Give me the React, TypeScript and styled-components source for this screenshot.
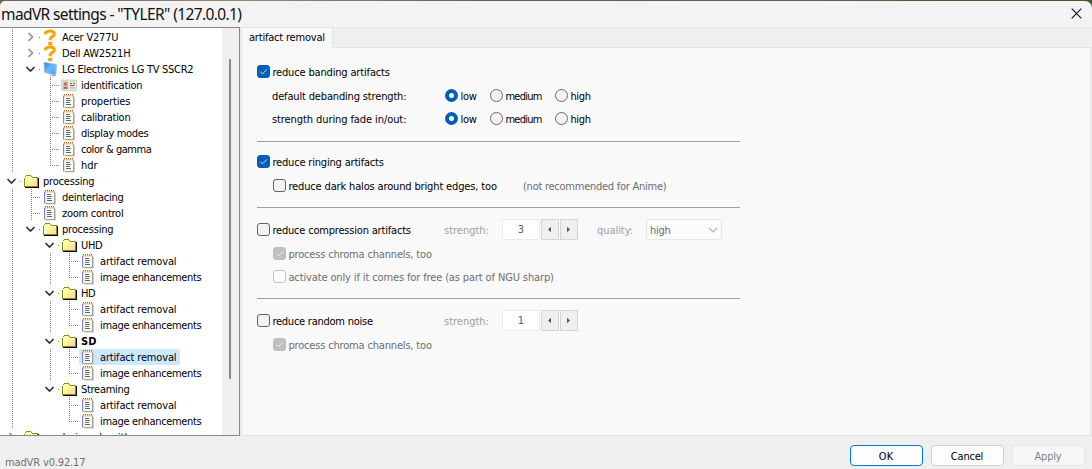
import React, { useLayoutEffect, useRef, useState } from 'react';
import styled, { createGlobalStyle, css } from 'styled-components';

const GlobalStyle = createGlobalStyle`
  *, *::before, *::after { box-sizing: border-box; }
  body {
    margin: 0;
    overflow: hidden;
    font: 11px/16px 'DejaVu Sans Condensed', 'DejaVu Sans', sans-serif;
    font-stretch: condensed;
    color: #000;
  }
`;

const TextRun = styled.span<{ $bold?: boolean }>`
  display: inline-block;
  padding-top: 1px;
  margin-bottom: -1px;
  white-space: pre;
  font-weight: ${(p) => (p.$bold ? 700 : 400)};
`;

/* Text tracked so that it takes up the given number of pixels. */
function Text({ children, w, bold }: { children: string; w: number; bold?: boolean }) {
  const ref = useRef<HTMLSpanElement>(null);
  const [spacing, setSpacing] = useState(0);
  useLayoutEffect(() => {
    if (ref.current) {
      const natural = ref.current.getBoundingClientRect().width;
      setSpacing((w + 0.4 - natural) / children.length);
    }
  }, [children, w]);
  return (
    <TextRun ref={ref} $bold={bold} style={{ letterSpacing: spacing }}>
      {children}
    </TextRun>
  );
}

const Window = styled.div`
  display: flex;
  flex-direction: column;
  width: 1092px;
  height: 469px;
  background: #efefef;
  overflow: hidden;
`;

const Desktop = styled.div`
  background: linear-gradient(90deg, #6f6257 0, #94887d 240px, #6c5d50 480px, #59604a 760px, #3f5c2f 1092px);
`;

const TitleBar = styled.header`
  display: flex;
  align-items: center;
  justify-content: space-between;
  height: 26px;
  margin-top: 1px;
  padding: 0 10px 2px 1px;
  background: #f3f3f3;
  border-radius: 5px 7px 0 0;
  font: 15.5px/24px 'Noto Sans', 'Open Sans', sans-serif;
  color: #111;
`;

const Body = styled.main`
  display: flex;
  height: 409px;
`;

const Tree = styled.nav`
  display: flex;
  width: 240px;
  height: 409px;
  border: solid #828790;
  border-width: 1px 1px 1px 0;
  background: #fff;
  overflow: hidden;
`;

const TreeRows = styled.div`
  flex: 1;
  height: 407px;
  padding: 1px 0 0 3px;
  overflow: hidden;
`;

const ScrollTrack = styled.div`
  width: 17px;
  padding: 31px 0 0 7px;
  background: #f0f0f0;
`;

const ScrollThumb = styled.div`
  width: 2px;
  height: 320px;
  border-radius: 1px;
  background: #868686;
`;

const TreeRow = styled.div`
  display: flex;
  height: 16px;
`;

type CellKind = 'empty' | 'line' | 'tee' | 'end' | 'open' | 'closed';

const vDots = 'repeating-linear-gradient(180deg, #808080 0 1px, transparent 1px 2px)';
const hDots = 'repeating-linear-gradient(90deg, #808080 0 1px, transparent 1px 2px)';

const Cell = styled.span<{ $kind: CellKind }>`
  display: flex;
  align-items: center;
  width: 19px;
  height: 16px;
  background-repeat: no-repeat;
  ${(p) => p.$kind === 'line' && css`
    background-image: ${vDots};
    background-size: 1px 16px;
    background-position: 9px 0;
  `}
  ${(p) => (p.$kind === 'tee' || p.$kind === 'end') && css`
    background-image: ${vDots}, ${hDots};
    background-size: 1px ${p.$kind === 'tee' ? 16 : 9}px, 10px 1px;
    background-position: 9px 0, 9px 8px;
  `}
  ${(p) => (p.$kind === 'open' || p.$kind === 'closed') && css`
    background-image: ${hDots};
    background-size: 3px 1px;
    background-position: 17px 8px;
  `}
`;

const Item = styled.span<{ $selected?: boolean }>`
  display: flex;
  gap: 3px;
  height: 16px;
  padding: 0 4px 0 2px;
  border-radius: 2px;
  background: ${(p) => (p.$selected ? '#cce8ff' : 'transparent')};
`;

const IconSlot = styled.span`
  display: block;
  width: 16px;
  height: 16px;
  svg { display: block; overflow: visible; }
`;

const Chevron = ({ open }: { open: boolean }) => (
  <svg width="19" height="16" viewBox="0 0 19 16" fill="none">
    {open ? (
      <path d="M4.5 6l4 4 4-4" stroke="#333" strokeWidth="1.7" />
    ) : (
      <path d="M6.5 4l4 4-4 4" stroke="#8c8c8c" strokeWidth="1.5" />
    )}
  </svg>
);

const FolderIcon = () => (
  <svg width="16" height="16" viewBox="0 0 16 16" shapeRendering="crispEdges">
    <defs>
      <linearGradient id="folder" x1="0" y1="0" x2="1" y2="1">
        <stop offset="0.3" stopColor="#ffffa0" />
        <stop offset="1" stopColor="#ffcda0" />
      </linearGradient>
    </defs>
    <g transform="translate(0 1)">
      <path d="M1 4V3h1V2h5v1h1v1h6v9H1z" fill="url(#folder)" />
      <path d="M0.5 13V3.5M2 2.5h-1M2 1.5h5M7 2.5h1M8 3.5h6M1 12.5h13M13.5 4v8" stroke="#8c8a10" fill="none" />
      <path d="M2 4.5h11M1.5 5v7" stroke="#ffffd8" fill="none" />
      <path d="M1 13.5h14M14.5 4v10" stroke="#000" fill="none" />
    </g>
  </svg>
);

const NoteIcon = () => (
  <svg width="16" height="16" viewBox="0 0 16 16">
    <path d="M12 4h1v11.4H3v-1" fill="#cfcfcf" />
    <rect x="1.5" y="2.5" width="10" height="11.8" fill="#fffff8" />
    <path d="M1.6 3v11.5" stroke="#8482d8" strokeWidth="1.2" />
    <path d="M11.5 3v11.4M2.6 14.4h9" stroke="#8b9a94" strokeWidth="0.9" />
    <path d="M2 1.5h10" stroke="#8c6a30" strokeWidth="1" strokeDasharray="1 1" />
    <path d="M1.5 2.8h10.5" stroke="#dfa04c" strokeWidth="1.4" strokeDasharray="1.3 0.7" />
    <path d="M4 5.5H8M4 7.5H9M4 9.5H8M4 11.5H9" stroke="#566a5d" strokeWidth="1" />
  </svg>
);

const QuestionIcon = () => (
  <svg width="16" height="16" viewBox="0 0 16 16" fill="none">
    <path d="M2.6 5.4V3.6Q4.4 1.9 7 1.9Q11.3 1.9 11.3 4.9Q11.3 6.6 9.2 7.7Q7.1 8.8 7.1 11.3" stroke="#faa20a" strokeWidth="3" />
    <path d="M5.2 12.8h4v3.4h-4z" fill="#faa20a" />
  </svg>
);

const MonitorIcon = () => (
  <svg width="16" height="16" viewBox="0 0 16 16">
    <defs>
      <linearGradient id="screen" x1="0" y1="0" x2="1" y2="1">
        <stop offset="0" stopColor="#2687e4" />
        <stop offset="0.5" stopColor="#6dbbfa" />
        <stop offset="1" stopColor="#3b9df0" />
      </linearGradient>
    </defs>
    <path d="M5 13.5l5 2 3-0.7 1-11-1.5-0.8L11 14z" fill="#a6b0ba" />
    <path d="M1 1.2l12.2 2L12 14 1.5 11.6z" fill="url(#screen)" stroke="#9cc6ea" strokeWidth="0.6" />
  </svg>
);

const CardIcon = () => (
  <svg width="16" height="16" viewBox="0 0 16 16">
    <rect x="-0.5" y="3" width="15" height="10.5" rx="0.8" fill="#eceadf" stroke="#c5c7bd" strokeWidth="0.8" />
    <rect x="1" y="5" width="5" height="7" fill="#e0b5a6" />
    <circle cx="3.5" cy="7" r="1.4" fill="#a8685a" />
    <path d="M1.4 12c0-3.4 4.4-3.4 4.4 0z" fill="#c0645c" />
    <path d="M1 4.3h5M8 4.3h5" stroke="#cdd0b8" />
    <path d="M8 6.5h2M11 6.5h2M8 8.5h4.5" stroke="#5c625b" strokeWidth="1.1" />
    <path d="M8 10.9h5" stroke="#a9b9a9" strokeWidth="1.2" />
  </svg>
);

const icons = {
  folder: FolderIcon,
  note: NoteIcon,
  question: QuestionIcon,
  monitor: MonitorIcon,
  card: CardIcon,
};

const cellKinds: Record<string, CellKind> = {
  '.': 'empty', '|': 'line', t: 'tee', l: 'end', v: 'open', '>': 'closed',
};

interface Node {
  cells: string;
  icon: keyof typeof icons;
  label: string;
  w: number;
  bold?: boolean;
  selected?: boolean;
}

const nodes: Node[] = [
  { cells: '|>', icon: 'question', label: 'Acer V277U', w: 56 },
  { cells: '|>', icon: 'question', label: 'Dell AW2521H', w: 68 },
  { cells: '|v', icon: 'monitor', label: 'LG Electronics LG TV SSCR2', w: 131 },
  { cells: '|.t', icon: 'card', label: 'identification', w: 61 },
  { cells: '|.t', icon: 'note', label: 'properties', w: 49 },
  { cells: '|.t', icon: 'note', label: 'calibration', w: 49 },
  { cells: '|.t', icon: 'note', label: 'display modes', w: 67 },
  { cells: '|.t', icon: 'note', label: 'color & gamma', w: 70 },
  { cells: '|.l', icon: 'note', label: 'hdr', w: 16 },
  { cells: 'v', icon: 'folder', label: 'processing', w: 51 },
  { cells: '|t', icon: 'note', label: 'deinterlacing', w: 61 },
  { cells: '|t', icon: 'note', label: 'zoom control', w: 61 },
  { cells: '|v', icon: 'folder', label: 'processing', w: 51 },
  { cells: '|.v', icon: 'folder', label: 'UHD', w: 21 },
  { cells: '|.|t', icon: 'note', label: 'artifact removal', w: 76 },
  { cells: '|.|l', icon: 'note', label: 'image enhancements', w: 101 },
  { cells: '|.v', icon: 'folder', label: 'HD', w: 14 },
  { cells: '|.|t', icon: 'note', label: 'artifact removal', w: 76 },
  { cells: '|.|l', icon: 'note', label: 'image enhancements', w: 101 },
  { cells: '|.v', icon: 'folder', label: 'SD', w: 15, bold: true },
  { cells: '|.|t', icon: 'note', label: 'artifact removal', w: 76, selected: true },
  { cells: '|.|l', icon: 'note', label: 'image enhancements', w: 101 },
  { cells: '|.v', icon: 'folder', label: 'Streaming', w: 48 },
  { cells: '|..t', icon: 'note', label: 'artifact removal', w: 76 },
  { cells: '|..l', icon: 'note', label: 'image enhancements', w: 101 },
  { cells: '>', icon: 'folder', label: 'rendering algorithms', w: 102 },
];

const Tabs = styled.section`
  display: flex;
  flex-direction: column;
  align-items: flex-start;
  width: 850px;
  margin-left: 1px;
`;

const Tab = styled.div`
  width: 92px;
  height: 21px;
  margin-bottom: -1px;
  padding: 1px 0 0 7px;
  border: 1px solid #e3e3e3;
  border-bottom: 0;
  background: #f9f9f9;
  z-index: 1;
`;

const Page = styled.div`
  width: 850px;
  height: 390px;
  padding: 16px 0 0 15px;
  border: 1px solid #e3e3e3;
  background: #f9f9f9;
`;

const Row = styled.div<{ $gap?: number; $tall?: boolean; $indent?: boolean }>`
  display: flex;
  align-items: center;
  height: ${(p) => (p.$tall ? 22 : 16)}px;
  margin-top: ${(p) => p.$gap ?? 0}px;
  padding-left: ${(p) => (p.$indent ? 16 : 0)}px;
`;

const Lead = styled.div<{ $width: number }>`
  display: flex;
  flex: none;
  width: ${(p) => p.$width}px;
`;

const Divider = styled.hr<{ $gap: number }>`
  width: 483px;
  height: 1px;
  margin: ${(p) => p.$gap}px 0 0;
  border: 0;
  background: #a0a0a0;
`;

const CheckLabel = styled.label<{ $disabled?: boolean }>`
  display: flex;
  align-items: center;
  gap: 2.4px;
  color: ${(p) => (p.$disabled ? '#6d6d6d' : '#000')};
`;

const Box = styled.span<{ $checked?: boolean; $disabled?: boolean }>`
  display: block;
  width: 13px;
  height: 13px;
  margin-bottom: 1px;
  border-radius: 3px;
  border: 1px solid ${(p) => (p.$checked ? (p.$disabled ? '#bfbfbf' : '#005fb8') : p.$disabled ? '#c3c3c3' : '#626262')};
  background: ${(p) => (p.$checked ? (p.$disabled ? '#bfbfbf' : '#005fb8') : p.$disabled ? '#fbfbfb' : '#f3f3f3')};
  svg { display: block; }
`;

const Dot = styled.span<{ $on?: boolean }>`
  width: 13px;
  height: 13px;
  margin-bottom: 1px;
  border-radius: 50%;
  border: ${(p) => (p.$on ? '4px solid #005fb8' : '1px solid #6a6a6a')};
  background: ${(p) => (p.$on ? '#fff' : '#f3f3f3')};
`;

const RadioLabel = styled.label<{ $width: number }>`
  display: flex;
  align-items: center;
  gap: 2.4px;
  width: ${(p) => p.$width}px;
`;

const Muted = styled.span<{ $width?: number; $strong?: boolean }>`
  display: flex;
  flex: none;
  width: ${(p) => (p.$width ? `${p.$width}px` : 'auto')};
  color: ${(p) => (p.$strong ? '#6d6d6d' : '#a0a0a0')};
`;

const Field = styled.span`
  display: flex;
  justify-content: center;
  width: 38px;
  height: 21px;
  padding-top: 1px;
  border: 1px solid #ebebeb;
  border-radius: 2px;
  background: #fff;
  color: #606060;
`;

const StepButton = styled.span`
  display: flex;
  align-items: center;
  justify-content: center;
  width: 18px;
  height: 21px;
  margin-left: 1px;
  border: 1px solid #d5d5d5;
  background: #efefef;
`;

const Select = styled.span`
  display: flex;
  align-items: center;
  justify-content: space-between;
  width: 76px;
  height: 21px;
  padding: 1px 3px 0 3px;
  border: 1px solid #e6e6e6;
  border-radius: 2px;
  background: #fbfbfb;
  color: #6d6d6d;
`;

const Footer = styled.footer`
  display: flex;
  justify-content: space-between;
  height: 33px;
  padding: 9px 7px 0 5px;
`;

const Version = styled.span`
  padding-top: 9px;
  color: #707070;
`;

const Actions = styled.div`
  display: flex;
  gap: 8px;
`;

const Button = styled.button<{ $kind?: 'default' | 'disabled' }>`
  display: flex;
  align-items: center;
  justify-content: center;
  width: 73px;
  height: 21px;
  padding: 0 1px 0 0;
  border: 1px solid ${(p) => (p.$kind === 'default' ? '#0078d4' : p.$kind === 'disabled' ? '#e8e8e8' : '#d0d0d0')};
  border-radius: 4px;
  background: ${(p) => (p.$kind === 'disabled' ? '#f7f7f7' : '#fdfdfd')};
  color: ${(p) => (p.$kind === 'disabled' ? '#838383' : '#000')};
  font: inherit;
`;

interface CheckProps { label: string; w: number; checked?: boolean; disabled?: boolean }

const Check = ({ label, w, checked, disabled }: CheckProps) => (
  <CheckLabel $disabled={disabled}>
    <Box $checked={checked} $disabled={disabled}>
      {checked && (
        <svg width="11" height="11" viewBox="0 0 11 11" fill="none">
          <path d="M2.3 5.6l2.2 2.2 4.3-4.3" stroke="#fff" strokeWidth="0.9" opacity="0.9" />
        </svg>
      )}
    </Box>
    <Text w={w}>{label}</Text>
  </CheckLabel>
);

const Radios = () => (
  <>
    <RadioLabel $width={45}><Dot $on /><Text w={16}>low</Text></RadioLabel>
    <RadioLabel $width={65}><Dot /><Text w={36}>medium</Text></RadioLabel>
    <RadioLabel $width={45}><Dot /><Text w={20}>high</Text></RadioLabel>
  </>
);

const Stepper = ({ value }: { value: string }) => (
  <>
    <Muted $width={58}><Text w={44.5}>strength:</Text></Muted>
    <Field><Text w={6}>{value}</Text></Field>
    <StepButton>
      <svg width="6" height="7" viewBox="0 0 6 7"><path d="M4 0.7v5.6L1 3.5z" fill="#555" /></svg>
    </StepButton>
    <StepButton>
      <svg width="6" height="7" viewBox="0 0 6 7"><path d="M1 0.7v5.6l3-2.8z" fill="#555" /></svg>
    </StepButton>
  </>
);

export default function App() {
  return (
    <Window>
      <GlobalStyle />
      <Desktop>
        <TitleBar>
          <Text w={240}>madVR settings - "TYLER" (127.0.0.1)</Text>
          <svg width="11" height="11" viewBox="0 0 11 11"><path d="M0.7 0.7l9.6 9.6M10.3 0.7L0.7 10.3" stroke="#111" strokeWidth="1.1" /></svg>
        </TitleBar>
      </Desktop>
      <Body>
        <Tree>
          <TreeRows>
            {nodes.map((node, i) => {
              const Icon = icons[node.icon];
              return (
                <TreeRow key={i}>
                  {node.cells.split('').map((c, j) => (
                    <Cell key={j} $kind={cellKinds[c]}>
                      {(c === 'v' || c === '>') && <Chevron open={c === 'v'} />}
                    </Cell>
                  ))}
                  <Item $selected={node.selected}>
                    <IconSlot><Icon /></IconSlot>
                    <Text w={node.w} bold={node.bold}>{node.label}</Text>
                  </Item>
                </TreeRow>
              );
            })}
          </TreeRows>
          <ScrollTrack><ScrollThumb /></ScrollTrack>
        </Tree>
        <Tabs>
          <Tab><Text w={75.5}>artifact removal</Text></Tab>
          <Page>
            <Row><Check label="reduce banding artifacts" w={117} checked /></Row>
            <Row $gap={8}>
              <Lead $width={15} />
              <Lead $width={173}><Text w={134}>default debanding strength:</Text></Lead>
              <Radios />
            </Row>
            <Row $gap={7}>
              <Lead $width={15} />
              <Lead $width={173}><Text w={134}>strength during fade in/out:</Text></Lead>
              <Radios />
            </Row>
            <Divider $gap={14} />
            <Row $gap={12}><Check label="reduce ringing artifacts" w={111} checked /></Row>
            <Row $gap={8} $indent>
              <Lead $width={250}><Check label="reduce dark halos around bright edges, too" w={208} /></Lead>
              <Muted $strong><Text w={143}>(not recommended for Anime)</Text></Muted>
            </Row>
            <Divider $gap={13} />
            <Row $gap={11} $tall>
              <Lead $width={187}><Check label="reduce compression artifacts" w={138} /></Lead>
              <Stepper value="3" />
              <Lead $width={19} />
              <Muted $width={49}><Text w={35.5}>quality:</Text></Muted>
              <Select>
                <Text w={20}>high</Text>
                <svg width="10" height="6" viewBox="0 0 10 6"><path d="M1 1l4 4 4-4" fill="none" stroke="#b5b5b5" strokeWidth="1.1" /></svg>
              </Select>
            </Row>
            <Row $gap={5} $indent><Check label="process chroma channels, too" w={143} checked disabled /></Row>
            <Row $gap={7} $indent><Check label="activate only if it comes for free (as part of NGU sharp)" w={265} disabled /></Row>
            <Divider $gap={13} />
            <Row $gap={11} $tall>
              <Lead $width={187}><Check label="reduce random noise" w={100} /></Lead>
              <Stepper value="1" />
            </Row>
            <Row $gap={5} $indent><Check label="process chroma channels, too" w={143} checked disabled /></Row>
          </Page>
        </Tabs>
      </Body>
      <Footer>
        <Version><Text w={80}>madVR v0.92.17</Text></Version>
        <Actions>
          <Button $kind="default"><Text w={14}>OK</Text></Button>
          <Button><Text w={32}>Cancel</Text></Button>
          <Button $kind="disabled"><Text w={26.5}>Apply</Text></Button>
        </Actions>
      </Footer>
    </Window>
  );
}
